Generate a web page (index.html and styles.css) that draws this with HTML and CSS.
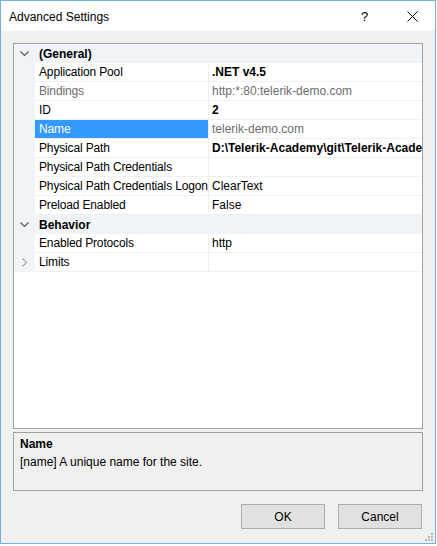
FILE: index.html
```html
<!DOCTYPE html>
<html>
<head>
<meta charset="utf-8">
<link rel="stylesheet" href="styles.css">
</head>
<body>
<div class="window">
  <div class="titlebar">
    <span class="title">Advanced Settings</span>
    <span class="help">?</span>
    <span class="close"><svg width="11" height="11" viewBox="0 0 11 11"><path d="M0.5 0.5 L10.5 10.5 M10.5 0.5 L0.5 10.5" stroke="#000" stroke-width="1" fill="none"/></svg></span>
  </div>
  <div class="content">
    <div class="grid">
      <div class="cat">
        <span class="gut"><svg width="9" height="6" viewBox="0 0 9 6"><path d="M0.5 0.5 L4.5 4.5 L8.5 0.5" stroke="#5a5a5a" stroke-width="1.2" fill="none"/></svg></span>
        <span class="catname">(General)</span>
      </div>
      <div class="row"><span class="gut"></span><span class="name">Application Pool</span><span class="val b">.NET v4.5</span></div>
      <div class="row"><span class="gut"></span><span class="name dim">Bindings</span><span class="val dim">http:*:80:telerik-demo.com</span></div>
      <div class="row"><span class="gut"></span><span class="name">ID</span><span class="val b">2</span></div>
      <div class="row sel"><span class="gut"></span><span class="name">Name</span><span class="val dim">telerik-demo.com</span></div>
      <div class="row"><span class="gut"></span><span class="name">Physical Path</span><span class="val b">D:\Telerik-Academy\git\Telerik-Academy\Demos</span></div>
      <div class="row"><span class="gut"></span><span class="name">Physical Path Credentials</span><span class="val"></span></div>
      <div class="row"><span class="gut"></span><span class="name">Physical Path Credentials Logon</span><span class="val">ClearText</span></div>
      <div class="row"><span class="gut"></span><span class="name">Preload Enabled</span><span class="val">False</span></div>
      <div class="cat">
        <span class="gut"><svg width="9" height="6" viewBox="0 0 9 6"><path d="M0.5 0.5 L4.5 4.5 L8.5 0.5" stroke="#5a5a5a" stroke-width="1.2" fill="none"/></svg></span>
        <span class="catname">Behavior</span>
      </div>
      <div class="row"><span class="gut"></span><span class="name">Enabled Protocols</span><span class="val">http</span></div>
      <div class="row"><span class="gut"><svg width="5" height="9" viewBox="0 0 5 9"><path d="M0.5 0.5 L4.5 4.5 L0.5 8.5" stroke="#a6a6a6" stroke-width="1.2" fill="none"/></svg></span><span class="name">Limits</span><span class="val"></span></div>
    </div>
    <div class="desc">
      <div class="desc-title">Name</div>
      <div class="desc-text">[name] A unique name for the site.</div>
    </div>
    <div class="buttons">
      <button class="btn">OK</button>
      <button class="btn">Cancel</button>
    </div>
    <div class="grip">
      <svg width="10" height="10" viewBox="0 0 10 10" fill="#b8b8b8">
        <rect x="7" y="1" width="2" height="2"/>
        <rect x="4" y="4" width="2" height="2"/><rect x="7" y="4" width="2" height="2"/>
        <rect x="1" y="7" width="2" height="2"/><rect x="4" y="7" width="2" height="2"/><rect x="7" y="7" width="2" height="2"/>
      </svg>
    </div>
  </div>
</div>
</body>
</html>
```

FILE: styles.css
```css
* { box-sizing: border-box; }
html, body { margin: 0; padding: 0; background: #ffffff; }
body {
  font-family: "Liberation Sans", Arial, sans-serif;
  font-size: 12px;
  color: #000;
}
.window {
  width: 436px;
  height: 544px;
  border: 1px solid #6fb3e6;
  background: #f0f0f0;
  display: flex;
  flex-direction: column;
}
.titlebar {
  height: 30px;
  background: #ffffff;
  display: flex;
  align-items: center;
  padding-left: 8px;
  flex: none;
}
.title {
  flex: 1;
  font-size: 12px;
  padding-top: 1px;
}
.help {
  width: 12px;
  font-size: 13px;
  margin-right: 34px;
  padding-top: 1px;
}
.close {
  width: 11px;
  height: 11px;
  margin-right: 17px;
  display: flex;
}
.content {
  flex: 1;
  display: flex;
  flex-direction: column;
  padding: 12px 12px 0 12px;
  position: relative;
}
.grid {
  height: 386px;
  border: 1px solid #a0a0a0;
  background: #ffffff;
  display: flex;
  flex-direction: column;
  flex: none;
}
.cat, .row {
  display: grid;
  grid-template-columns: 21px 174px 1fr;
  height: 19px;
  flex: none;
}
.cat {
  background: #f0f3f8;
}
.gut {
  background: #f0f3f8;
  display: flex;
  align-items: center;
  justify-content: center;
}
.cat .gut { padding-top: 1px; }
.catname {
  grid-column: 2 / 4;
  font-weight: bold;
  padding-left: 4px;
  padding-top: 1px;
  line-height: 18px;
}
.name {
  padding-left: 4px;
  padding-top: 1px;
  line-height: 17px;
  border-bottom: 1px solid #f0f0f0;
  border-right: 1px solid #f0f0f0;
  white-space: nowrap;
  overflow: hidden;
  letter-spacing: -0.15px;
}
.val {
  padding-left: 3px;
  padding-top: 1px;
  line-height: 17px;
  border-bottom: 1px solid #f0f0f0;
  white-space: nowrap;
  overflow: hidden;
}
.b { font-weight: bold; }
.dim { color: #6d6d6d; }
.sel .name {
  background: #3399ff;
  color: #ffffff;
}
.desc {
  margin-top: 3px;
  height: 59px;
  border: 1px solid #a0a0a0;
  background: #f0f0f0;
  padding: 4px 6px;
  flex: none;
}
.desc-title {
  font-weight: bold;
  line-height: 15px;
}
.desc-text {
  line-height: 17px;
  margin-top: 2px;
}
.buttons {
  display: flex;
  justify-content: flex-end;
  gap: 13px;
  margin-top: 13px;
  padding-right: 1px;
}
.btn {
  width: 84px;
  height: 25px;
  background: #e1e1e1;
  border: 1px solid #adadad;
  font-family: "Liberation Sans", Arial, sans-serif;
  font-size: 12px;
  color: #000;
  padding: 0;
}
.grip {
  position: absolute;
  right: 1px;
  bottom: 1px;
  width: 10px;
  height: 10px;
  display: flex;
}
```
